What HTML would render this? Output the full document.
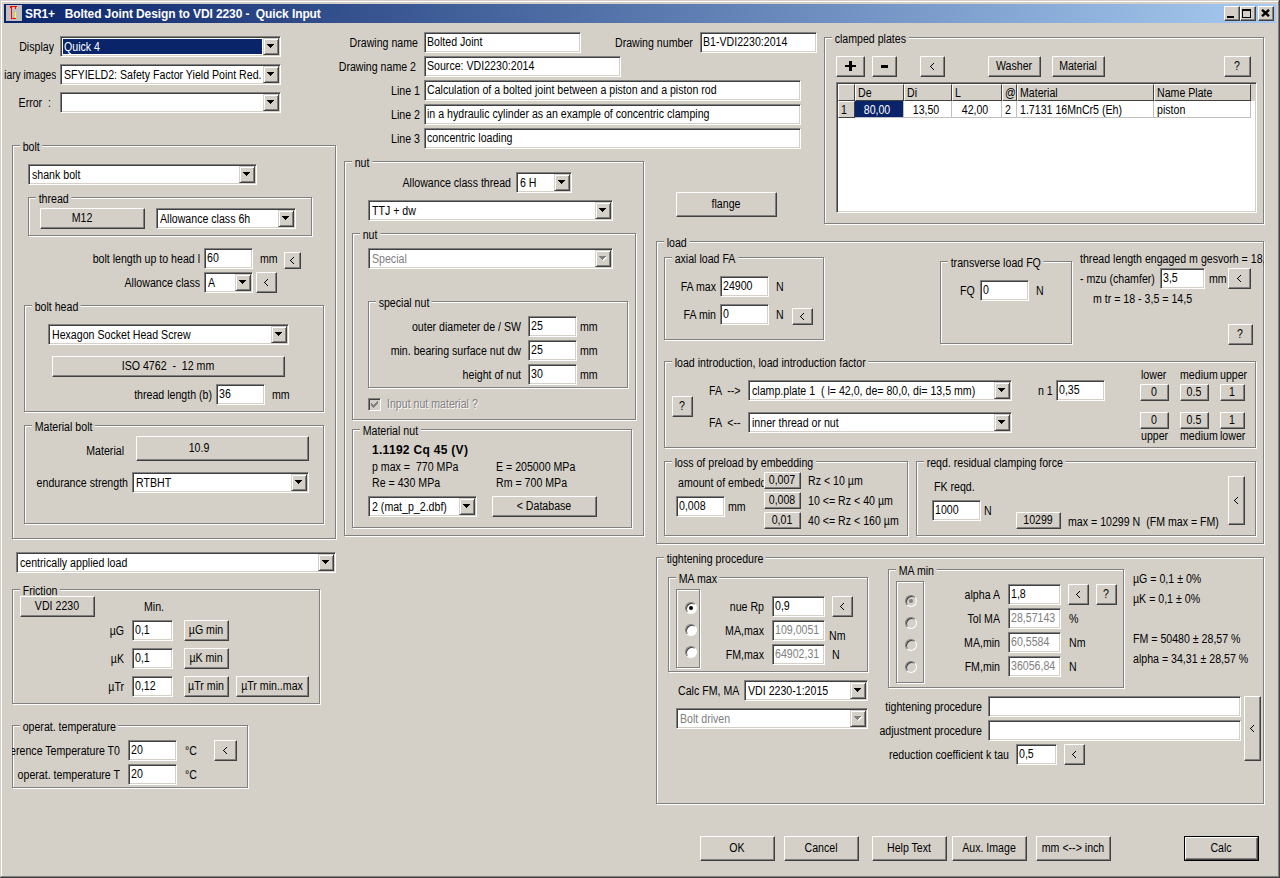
<!DOCTYPE html>
<html><head><meta charset="utf-8"><style>
*{margin:0;padding:0}
html,body{width:1280px;height:878px;overflow:hidden;background:#D4D0C8}
body{position:relative;font-family:"Liberation Sans",sans-serif;font-size:11px;color:#000}
body>div,body>svg{position:absolute}
.t{position:absolute;white-space:pre;line-height:14px;font-size:12px}
.pre{white-space:pre}
.e{box-sizing:border-box;background:#fff;border:1px solid;border-color:#808080 #fff #fff #808080;box-shadow:inset 1px 1px #404040, inset -1px -1px #D4D0C8}
.cb{box-sizing:border-box;background:#D4D0C8;border:1px solid;border-color:#D4D0C8 #404040 #404040 #D4D0C8;box-shadow:inset 1px 1px #fff, inset -1px -1px #808080}
.arr{width:0;height:0;border-left:4px solid transparent;border-right:4px solid transparent;border-top:4px solid #000;box-sizing:content-box;margin-left:0}
.b{box-sizing:border-box;background:#D4D0C8;border:1px solid;border-color:#fff #404040 #404040 #fff;box-shadow:inset -1px -1px #808080}
.bd{box-sizing:border-box;border:1px solid #000}
.hc{box-sizing:border-box;background:#D4D0C8;border:1px solid;border-color:#fff #404040 #404040 #fff}
.gg{box-sizing:border-box;border:1px solid #808080}
.gw{box-sizing:border-box;border:1px solid #fff}
.gl{background:#D4D0C8;padding:0 3px 0 3px}
.emb{text-shadow:1px 1px #fff}
.rad{width:12px;height:12px;box-sizing:border-box;border-radius:6px;background:#fff;border:1px solid;border-color:#808080 #fff #fff #808080;box-shadow:inset 1px 1px #404040}
</style></head><body>
<div style="left:0px;top:0px;width:1280px;height:878px;background:#D4D0C8"></div>
<div style="left:1px;top:1px;width:1278px;height:876px;border-top:1px solid #fff;border-left:1px solid #fff;box-sizing:border-box"></div>
<div style="left:0px;top:0px;width:1280px;height:878px;border-right:1px solid #404040;border-bottom:1px solid #404040;box-sizing:border-box"></div>
<div style="left:1px;top:1px;width:1278px;height:876px;border-right:1px solid #808080;border-bottom:1px solid #808080;box-sizing:border-box"></div>
<div style="left:4px;top:4px;width:1272px;height:19px;background:linear-gradient(to right,#0A246A,#A6CAF0)"></div>
<div style="left:6px;top:5px;width:16px;height:16px;background:#C0C0C0"></div>
<div style="left:10px;top:6px;width:7px;height:1px;background:#f00"></div>
<div style="left:10px;top:7px;width:1px;height:1px;background:#f00"></div>
<div style="left:11px;top:7px;width:1px;height:12px;background:#f00"></div>
<div style="left:11px;top:18px;width:5px;height:1px;background:#f00"></div>
<div style="left:15px;top:7px;width:1px;height:2px;background:#f00"></div>
<div style="left:15px;top:12px;width:1px;height:6px;background:#ff0"></div>
<div class="t" style="left:25px;top:7px;color:#fff;font-weight:bold;font-size:12px;letter-spacing:-0.1px;white-space:pre">SR1+   Bolted Joint Design to VDI 2230 -  Quick Input</div>
<div class="b" style="left:1224px;top:6px;width:16px;height:15px"></div>
<div class="b" style="left:1240px;top:6px;width:16px;height:15px"></div>
<div class="b" style="left:1258px;top:6px;width:16px;height:15px"></div>
<div style="left:1227px;top:16px;width:7px;height:2px;background:#000"></div>
<div style="left:1242px;top:9px;width:9px;height:9px;border:1px solid #000;border-top-width:2px;box-sizing:border-box"></div>
<svg style="position:absolute;left:1261px;top:9px" width="9" height="8" viewBox="0 0 9 8"><path d="M1 0.8 L8 7.2 M8 0.8 L1 7.2" stroke="#000" stroke-width="2.4"/></svg>
<div class="t" style="left:-446px;top:40px;width:500px;text-align:right;transform:scaleX(0.884);transform-origin:right top;">Display</div>
<div class="e" style="left:60px;top:36px;width:221px;height:21px"></div>
<div class="cb" style="left:263px;top:38px;width:16px;height:17px"></div>
<div style="left:267px;top:44px;width:7px;height:1px;background:#000"></div>
<div style="left:268px;top:45px;width:5px;height:1px;background:#000"></div>
<div style="left:269px;top:46px;width:3px;height:1px;background:#000"></div>
<div style="left:270px;top:47px;width:1px;height:1px;background:#000"></div>
<div style="left:63px;top:39px;width:199px;height:15px;background:#0A246A"></div>
<div class="t " style="left:64px;top:40px;transform:scaleX(0.884);transform-origin:left top;color:#fff;width:225.11px;height:14px;overflow:hidden;">Quick 4</div>
<div class="t" style="left:4px;top:68px;width:52px;height:14px;overflow:hidden;"><div style="position:absolute;right:0;top:0;transform:scaleX(0.85);transform-origin:right top;">Auxiliary images</div></div>
<div class="e" style="left:60px;top:64px;width:221px;height:21px"></div>
<div class="cb" style="left:263px;top:66px;width:16px;height:17px"></div>
<div style="left:267px;top:72px;width:7px;height:1px;background:#000"></div>
<div style="left:268px;top:73px;width:5px;height:1px;background:#000"></div>
<div style="left:269px;top:74px;width:3px;height:1px;background:#000"></div>
<div style="left:270px;top:75px;width:1px;height:1px;background:#000"></div>
<div class="t " style="left:64px;top:68px;transform:scaleX(0.884);transform-origin:left top;width:225.11px;height:14px;overflow:hidden;">SFYIELD2: Safety Factor Yield Point Red.</div>
<div class="t" style="left:-449px;top:96px;width:500px;text-align:right;transform:scaleX(0.884);transform-origin:right top;">Error  :</div>
<div class="e" style="left:60px;top:92px;width:221px;height:21px"></div>
<div class="cb" style="left:263px;top:94px;width:16px;height:17px"></div>
<div style="left:267px;top:100px;width:7px;height:1px;background:#000"></div>
<div style="left:268px;top:101px;width:5px;height:1px;background:#000"></div>
<div style="left:269px;top:102px;width:3px;height:1px;background:#000"></div>
<div style="left:270px;top:103px;width:1px;height:1px;background:#000"></div>
<div class="gw" style="left:13px;top:146px;width:324px;height:394px"></div>
<div class="gg" style="left:12px;top:145px;width:324px;height:394px"></div>
<div class="t gl" style="left:20px;top:140px;transform:scaleX(0.884);transform-origin:left top;">bolt</div>
<div class="e" style="left:28px;top:164px;width:229px;height:21px"></div>
<div class="cb" style="left:239px;top:166px;width:16px;height:17px"></div>
<div style="left:243px;top:172px;width:7px;height:1px;background:#000"></div>
<div style="left:244px;top:173px;width:5px;height:1px;background:#000"></div>
<div style="left:245px;top:174px;width:3px;height:1px;background:#000"></div>
<div style="left:246px;top:175px;width:1px;height:1px;background:#000"></div>
<div class="t " style="left:32px;top:168px;transform:scaleX(0.884);transform-origin:left top;width:234.16px;height:14px;overflow:hidden;">shank bolt</div>
<div class="gw" style="left:29px;top:198px;width:284px;height:39px"></div>
<div class="gg" style="left:28px;top:197px;width:284px;height:39px"></div>
<div class="t gl" style="left:36px;top:192px;transform:scaleX(0.884);transform-origin:left top;">thread</div>
<div class="b" style="left:40px;top:208px;width:105px;height:21px"></div>
<div class="t" style="left:30px;top:211px;width:104px;text-align:center;transform:scaleX(0.884);transform-origin:center top;">M12</div>
<div class="e" style="left:156px;top:208px;width:140px;height:21px"></div>
<div class="cb" style="left:278px;top:210px;width:16px;height:17px"></div>
<div style="left:282px;top:216px;width:7px;height:1px;background:#000"></div>
<div style="left:283px;top:217px;width:5px;height:1px;background:#000"></div>
<div style="left:284px;top:218px;width:3px;height:1px;background:#000"></div>
<div style="left:285px;top:219px;width:1px;height:1px;background:#000"></div>
<div class="t " style="left:160px;top:212px;transform:scaleX(0.884);transform-origin:left top;width:133.48px;height:14px;overflow:hidden;">Allowance class 6h</div>
<div class="t" style="left:-300px;top:252px;width:500px;text-align:right;transform:scaleX(0.884);transform-origin:right top;">bolt length up to head l</div>
<div class="e" style="left:204px;top:248px;width:49px;height:21px"></div>
<div class="t " style="left:207px;top:251px;transform:scaleX(0.884);transform-origin:left top;width:49.77px;height:14px;overflow:hidden;">60</div>
<div class="t " style="left:260px;top:252px;transform:scaleX(0.884);transform-origin:left top;">mm</div>
<div class="b" style="left:284px;top:252px;width:17px;height:17px"></div>
<div style="left:293px;top:257px;width:1px;height:1px;background:#000"></div>
<div style="left:292px;top:258px;width:1px;height:1px;background:#000"></div>
<div style="left:291px;top:259px;width:1px;height:1px;background:#000"></div>
<div style="left:290px;top:260px;width:1px;height:1px;background:#000"></div>
<div style="left:291px;top:261px;width:1px;height:1px;background:#000"></div>
<div style="left:292px;top:262px;width:1px;height:1px;background:#000"></div>
<div style="left:293px;top:263px;width:1px;height:1px;background:#000"></div>
<div class="t" style="left:-300px;top:276px;width:500px;text-align:right;transform:scaleX(0.884);transform-origin:right top;">Allowance class</div>
<div class="e" style="left:204px;top:272px;width:49px;height:21px"></div>
<div class="cb" style="left:235px;top:274px;width:16px;height:17px"></div>
<div style="left:239px;top:280px;width:7px;height:1px;background:#000"></div>
<div style="left:240px;top:281px;width:5px;height:1px;background:#000"></div>
<div style="left:241px;top:282px;width:3px;height:1px;background:#000"></div>
<div style="left:242px;top:283px;width:1px;height:1px;background:#000"></div>
<div class="t " style="left:208px;top:276px;transform:scaleX(0.884);transform-origin:left top;width:30.54px;height:14px;overflow:hidden;">A</div>
<div class="b" style="left:256px;top:272px;width:21px;height:21px"></div>
<div style="left:267px;top:279px;width:1px;height:1px;background:#000"></div>
<div style="left:266px;top:280px;width:1px;height:1px;background:#000"></div>
<div style="left:265px;top:281px;width:1px;height:1px;background:#000"></div>
<div style="left:264px;top:282px;width:1px;height:1px;background:#000"></div>
<div style="left:265px;top:283px;width:1px;height:1px;background:#000"></div>
<div style="left:266px;top:284px;width:1px;height:1px;background:#000"></div>
<div style="left:267px;top:285px;width:1px;height:1px;background:#000"></div>
<div class="gw" style="left:25px;top:306px;width:300px;height:107px"></div>
<div class="gg" style="left:24px;top:305px;width:300px;height:107px"></div>
<div class="t gl" style="left:32px;top:300px;transform:scaleX(0.884);transform-origin:left top;">bolt head</div>
<div class="e" style="left:48px;top:324px;width:241px;height:21px"></div>
<div class="cb" style="left:271px;top:326px;width:16px;height:17px"></div>
<div style="left:275px;top:332px;width:7px;height:1px;background:#000"></div>
<div style="left:276px;top:333px;width:5px;height:1px;background:#000"></div>
<div style="left:277px;top:334px;width:3px;height:1px;background:#000"></div>
<div style="left:278px;top:335px;width:1px;height:1px;background:#000"></div>
<div class="t " style="left:52px;top:328px;transform:scaleX(0.884);transform-origin:left top;width:247.74px;height:14px;overflow:hidden;">Hexagon Socket Head Screw</div>
<div class="b" style="left:52px;top:356px;width:233px;height:21px"></div>
<div class="t" style="left:52px;top:359px;width:232px;text-align:center;transform:scaleX(0.884);transform-origin:center top;">ISO 4762  -  12 mm</div>
<div class="t" style="left:-288px;top:388px;width:500px;text-align:right;transform:scaleX(0.884);transform-origin:right top;">thread length (b)</div>
<div class="e" style="left:216px;top:384px;width:49px;height:21px"></div>
<div class="t " style="left:219px;top:387px;transform:scaleX(0.884);transform-origin:left top;width:49.77px;height:14px;overflow:hidden;">36</div>
<div class="t " style="left:272px;top:388px;transform:scaleX(0.884);transform-origin:left top;">mm</div>
<div class="gw" style="left:25px;top:426px;width:300px;height:99px"></div>
<div class="gg" style="left:24px;top:425px;width:300px;height:99px"></div>
<div class="t gl" style="left:32px;top:420px;transform:scaleX(0.884);transform-origin:left top;">Material bolt</div>
<div class="t" style="left:-376px;top:444px;width:500px;text-align:right;transform:scaleX(0.884);transform-origin:right top;">Material</div>
<div class="b" style="left:136px;top:436px;width:173px;height:25px"></div>
<div class="t" style="left:113px;top:441px;width:172px;text-align:center;transform:scaleX(0.884);transform-origin:center top;">10.9</div>
<div class="t" style="left:-372px;top:476px;width:500px;text-align:right;transform:scaleX(0.884);transform-origin:right top;">endurance strength</div>
<div class="e" style="left:132px;top:472px;width:177px;height:21px"></div>
<div class="cb" style="left:291px;top:474px;width:16px;height:17px"></div>
<div style="left:295px;top:480px;width:7px;height:1px;background:#000"></div>
<div style="left:296px;top:481px;width:5px;height:1px;background:#000"></div>
<div style="left:297px;top:482px;width:3px;height:1px;background:#000"></div>
<div style="left:298px;top:483px;width:1px;height:1px;background:#000"></div>
<div class="t " style="left:136px;top:476px;transform:scaleX(0.884);transform-origin:left top;width:175.34px;height:14px;overflow:hidden;">RTBHT</div>
<div class="e" style="left:16px;top:552px;width:320px;height:21px"></div>
<div class="cb" style="left:318px;top:554px;width:16px;height:17px"></div>
<div style="left:322px;top:560px;width:7px;height:1px;background:#000"></div>
<div style="left:323px;top:561px;width:5px;height:1px;background:#000"></div>
<div style="left:324px;top:562px;width:3px;height:1px;background:#000"></div>
<div style="left:325px;top:563px;width:1px;height:1px;background:#000"></div>
<div class="t " style="left:20px;top:556px;transform:scaleX(0.884);transform-origin:left top;width:337.10px;height:14px;overflow:hidden;">centrically applied load</div>
<div class="gw" style="left:13px;top:590px;width:308px;height:115px"></div>
<div class="gg" style="left:12px;top:589px;width:308px;height:115px"></div>
<div class="t gl" style="left:20px;top:584px;transform:scaleX(0.884);transform-origin:left top;">Friction</div>
<div class="b" style="left:20px;top:596px;width:75px;height:21px"></div>
<div class="t" style="left:20px;top:599px;width:74px;text-align:center;transform:scaleX(0.884);transform-origin:center top;">VDI 2230</div>
<div class="t " style="left:144px;top:600px;transform:scaleX(0.884);transform-origin:left top;">Min.</div>
<div class="t" style="left:-376px;top:624px;width:500px;text-align:right;transform:scaleX(0.884);transform-origin:right top;">µG</div>
<div class="e" style="left:132px;top:620px;width:41px;height:21px"></div>
<div class="t " style="left:135px;top:623px;transform:scaleX(0.884);transform-origin:left top;width:40.72px;height:14px;overflow:hidden;">0,1</div>
<div class="b" style="left:184px;top:620px;width:45px;height:21px"></div>
<div class="t" style="left:184px;top:623px;width:44px;text-align:center;transform:scaleX(0.884);transform-origin:center top;">µG min</div>
<div class="t" style="left:-376px;top:652px;width:500px;text-align:right;transform:scaleX(0.884);transform-origin:right top;">µK</div>
<div class="e" style="left:132px;top:648px;width:41px;height:21px"></div>
<div class="t " style="left:135px;top:651px;transform:scaleX(0.884);transform-origin:left top;width:40.72px;height:14px;overflow:hidden;">0,1</div>
<div class="b" style="left:184px;top:648px;width:45px;height:21px"></div>
<div class="t" style="left:184px;top:651px;width:44px;text-align:center;transform:scaleX(0.884);transform-origin:center top;">µK min</div>
<div class="t" style="left:-376px;top:680px;width:500px;text-align:right;transform:scaleX(0.884);transform-origin:right top;">µTr</div>
<div class="e" style="left:132px;top:676px;width:41px;height:21px"></div>
<div class="t " style="left:135px;top:679px;transform:scaleX(0.884);transform-origin:left top;width:40.72px;height:14px;overflow:hidden;">0,12</div>
<div class="b" style="left:184px;top:676px;width:45px;height:21px"></div>
<div class="t" style="left:184px;top:679px;width:44px;text-align:center;transform:scaleX(0.884);transform-origin:center top;">µTr min</div>
<div class="b" style="left:236px;top:676px;width:73px;height:21px"></div>
<div class="t" style="left:236px;top:679px;width:72px;text-align:center;transform:scaleX(0.884);transform-origin:center top;">µTr min..max</div>
<div class="gw" style="left:13px;top:726px;width:236px;height:63px"></div>
<div class="gg" style="left:12px;top:725px;width:236px;height:63px"></div>
<div class="t gl" style="left:20px;top:720px;transform:scaleX(0.884);transform-origin:left top;">operat. temperature</div>
<div class="t" style="left:12px;top:744px;width:108px;height:14px;overflow:hidden;"><div style="position:absolute;right:0;top:0;transform:scaleX(0.884);transform-origin:right top;">Reference Temperature T0</div></div>
<div class="e" style="left:128px;top:740px;width:49px;height:21px"></div>
<div class="t " style="left:131px;top:743px;transform:scaleX(0.884);transform-origin:left top;width:49.77px;height:14px;overflow:hidden;">20</div>
<div class="t " style="left:185px;top:744px;transform:scaleX(0.884);transform-origin:left top;">°C</div>
<div class="b" style="left:214px;top:740px;width:23px;height:21px"></div>
<div style="left:226px;top:747px;width:1px;height:1px;background:#000"></div>
<div style="left:225px;top:748px;width:1px;height:1px;background:#000"></div>
<div style="left:224px;top:749px;width:1px;height:1px;background:#000"></div>
<div style="left:223px;top:750px;width:1px;height:1px;background:#000"></div>
<div style="left:224px;top:751px;width:1px;height:1px;background:#000"></div>
<div style="left:225px;top:752px;width:1px;height:1px;background:#000"></div>
<div style="left:226px;top:753px;width:1px;height:1px;background:#000"></div>
<div class="t" style="left:-380px;top:768px;width:500px;text-align:right;transform:scaleX(0.884);transform-origin:right top;">operat. temperature T</div>
<div class="e" style="left:128px;top:764px;width:49px;height:21px"></div>
<div class="t " style="left:131px;top:767px;transform:scaleX(0.884);transform-origin:left top;width:49.77px;height:14px;overflow:hidden;">20</div>
<div class="t " style="left:185px;top:768px;transform:scaleX(0.884);transform-origin:left top;">°C</div>
<div class="t" style="left:-82px;top:36px;width:500px;text-align:right;transform:scaleX(0.884);transform-origin:right top;">Drawing name</div>
<div class="e" style="left:424px;top:32px;width:157px;height:21px"></div>
<div class="t " style="left:427px;top:35px;transform:scaleX(0.884);transform-origin:left top;width:171.95px;height:14px;overflow:hidden;">Bolted Joint</div>
<div class="t" style="left:-84px;top:60px;width:500px;text-align:right;transform:scaleX(0.884);transform-origin:right top;">Drawing name 2</div>
<div class="e" style="left:424px;top:56px;width:197px;height:21px"></div>
<div class="t " style="left:427px;top:59px;transform:scaleX(0.884);transform-origin:left top;width:217.19px;height:14px;overflow:hidden;">Source: VDI2230:2014</div>
<div class="t" style="left:-80px;top:84px;width:500px;text-align:right;transform:scaleX(0.884);transform-origin:right top;">Line 1</div>
<div class="e" style="left:424px;top:80px;width:377px;height:21px"></div>
<div class="t " style="left:427px;top:83px;transform:scaleX(0.884);transform-origin:left top;width:420.81px;height:14px;overflow:hidden;">Calculation of a bolted joint between a piston and a piston rod</div>
<div class="t" style="left:-80px;top:108px;width:500px;text-align:right;transform:scaleX(0.884);transform-origin:right top;">Line 2</div>
<div class="e" style="left:424px;top:104px;width:377px;height:21px"></div>
<div class="t " style="left:427px;top:107px;transform:scaleX(0.884);transform-origin:left top;width:420.81px;height:14px;overflow:hidden;">in a hydraulic cylinder as an example of concentric clamping</div>
<div class="t" style="left:-80px;top:132px;width:500px;text-align:right;transform:scaleX(0.884);transform-origin:right top;">Line 3</div>
<div class="e" style="left:424px;top:128px;width:377px;height:21px"></div>
<div class="t " style="left:427px;top:131px;transform:scaleX(0.884);transform-origin:left top;width:420.81px;height:14px;overflow:hidden;">concentric loading</div>
<div class="t " style="left:615px;top:36px;transform:scaleX(0.884);transform-origin:left top;">Drawing number</div>
<div class="e" style="left:700px;top:32px;width:117px;height:21px"></div>
<div class="t " style="left:703px;top:35px;transform:scaleX(0.884);transform-origin:left top;width:126.70px;height:14px;overflow:hidden;">B1-VDI2230:2014</div>
<div class="gw" style="left:345px;top:162px;width:300px;height:375px"></div>
<div class="gg" style="left:344px;top:161px;width:300px;height:375px"></div>
<div class="t gl" style="left:352px;top:156px;transform:scaleX(0.884);transform-origin:left top;">nut</div>
<div class="t" style="left:11px;top:176px;width:500px;text-align:right;transform:scaleX(0.884);transform-origin:right top;">Allowance class thread</div>
<div class="e" style="left:516px;top:172px;width:56px;height:21px"></div>
<div class="cb" style="left:554px;top:174px;width:16px;height:17px"></div>
<div style="left:558px;top:180px;width:7px;height:1px;background:#000"></div>
<div style="left:559px;top:181px;width:5px;height:1px;background:#000"></div>
<div style="left:560px;top:182px;width:3px;height:1px;background:#000"></div>
<div style="left:561px;top:183px;width:1px;height:1px;background:#000"></div>
<div class="t " style="left:520px;top:176px;transform:scaleX(0.884);transform-origin:left top;width:38.46px;height:14px;overflow:hidden;">6 H</div>
<div class="e" style="left:368px;top:200px;width:245px;height:21px"></div>
<div class="cb" style="left:595px;top:202px;width:16px;height:17px"></div>
<div style="left:599px;top:208px;width:7px;height:1px;background:#000"></div>
<div style="left:600px;top:209px;width:5px;height:1px;background:#000"></div>
<div style="left:601px;top:210px;width:3px;height:1px;background:#000"></div>
<div style="left:602px;top:211px;width:1px;height:1px;background:#000"></div>
<div class="t " style="left:372px;top:204px;transform:scaleX(0.884);transform-origin:left top;width:252.26px;height:14px;overflow:hidden;">TTJ + dw</div>
<div class="gw" style="left:353px;top:234px;width:284px;height:187px"></div>
<div class="gg" style="left:352px;top:233px;width:284px;height:187px"></div>
<div class="t gl" style="left:360px;top:228px;transform:scaleX(0.884);transform-origin:left top;">nut</div>
<div class="e" style="left:368px;top:248px;width:245px;height:21px"></div>
<div class="cb" style="left:595px;top:250px;width:16px;height:17px"></div>
<div style="left:600px;top:257px;width:7px;height:1px;background:#fff"></div>
<div style="left:601px;top:258px;width:5px;height:1px;background:#fff"></div>
<div style="left:602px;top:259px;width:3px;height:1px;background:#fff"></div>
<div style="left:603px;top:260px;width:1px;height:1px;background:#fff"></div>
<div style="left:599px;top:256px;width:7px;height:1px;background:#808080"></div>
<div style="left:600px;top:257px;width:5px;height:1px;background:#808080"></div>
<div style="left:601px;top:258px;width:3px;height:1px;background:#808080"></div>
<div style="left:602px;top:259px;width:1px;height:1px;background:#808080"></div>
<div class="t " style="left:372px;top:252px;transform:scaleX(0.884);transform-origin:left top;color:#808080;width:252.26px;height:14px;overflow:hidden;">Special</div>
<div class="gw" style="left:369px;top:302px;width:260px;height:87px"></div>
<div class="gg" style="left:368px;top:301px;width:260px;height:87px"></div>
<div class="t gl" style="left:376px;top:296px;transform:scaleX(0.884);transform-origin:left top;">special nut</div>
<div class="t" style="left:21px;top:320px;width:500px;text-align:right;transform:scaleX(0.884);transform-origin:right top;">outer diameter de / SW</div>
<div class="e" style="left:528px;top:316px;width:49px;height:21px"></div>
<div class="t " style="left:531px;top:319px;transform:scaleX(0.884);transform-origin:left top;width:49.77px;height:14px;overflow:hidden;">25</div>
<div class="t " style="left:580px;top:320px;transform:scaleX(0.884);transform-origin:left top;">mm</div>
<div class="t" style="left:21px;top:344px;width:500px;text-align:right;transform:scaleX(0.884);transform-origin:right top;">min. bearing surface nut dw</div>
<div class="e" style="left:528px;top:340px;width:49px;height:21px"></div>
<div class="t " style="left:531px;top:343px;transform:scaleX(0.884);transform-origin:left top;width:49.77px;height:14px;overflow:hidden;">25</div>
<div class="t " style="left:580px;top:344px;transform:scaleX(0.884);transform-origin:left top;">mm</div>
<div class="t" style="left:21px;top:368px;width:500px;text-align:right;transform:scaleX(0.884);transform-origin:right top;">height of nut</div>
<div class="e" style="left:528px;top:364px;width:49px;height:21px"></div>
<div class="t " style="left:531px;top:367px;transform:scaleX(0.884);transform-origin:left top;width:49.77px;height:14px;overflow:hidden;">30</div>
<div class="t " style="left:580px;top:368px;transform:scaleX(0.884);transform-origin:left top;">mm</div>
<div style="left:368px;top:398px;width:13px;height:13px;box-sizing:border-box;border:1px solid;border-color:#808080 #fff #fff #808080;box-shadow:inset 1px 1px #404040, inset -1px -1px #D4D0C8;background:#D4D0C8"></div>
<div style="left:377px;top:401px;width:1px;height:1px;background:#808080"></div>
<div style="left:376px;top:402px;width:1px;height:1px;background:#808080"></div>
<div style="left:377px;top:402px;width:1px;height:1px;background:#808080"></div>
<div style="left:371px;top:403px;width:1px;height:1px;background:#808080"></div>
<div style="left:375px;top:403px;width:1px;height:1px;background:#808080"></div>
<div style="left:376px;top:403px;width:1px;height:1px;background:#808080"></div>
<div style="left:377px;top:403px;width:1px;height:1px;background:#808080"></div>
<div style="left:371px;top:404px;width:1px;height:1px;background:#808080"></div>
<div style="left:372px;top:404px;width:1px;height:1px;background:#808080"></div>
<div style="left:374px;top:404px;width:1px;height:1px;background:#808080"></div>
<div style="left:375px;top:404px;width:1px;height:1px;background:#808080"></div>
<div style="left:376px;top:404px;width:1px;height:1px;background:#808080"></div>
<div style="left:371px;top:405px;width:1px;height:1px;background:#808080"></div>
<div style="left:372px;top:405px;width:1px;height:1px;background:#808080"></div>
<div style="left:373px;top:405px;width:1px;height:1px;background:#808080"></div>
<div style="left:374px;top:405px;width:1px;height:1px;background:#808080"></div>
<div style="left:375px;top:405px;width:1px;height:1px;background:#808080"></div>
<div style="left:372px;top:406px;width:1px;height:1px;background:#808080"></div>
<div style="left:373px;top:406px;width:1px;height:1px;background:#808080"></div>
<div style="left:374px;top:406px;width:1px;height:1px;background:#808080"></div>
<div style="left:373px;top:407px;width:1px;height:1px;background:#808080"></div>
<div class="t emb" style="left:387px;top:397px;transform:scaleX(0.884);transform-origin:left top;color:#808080;">Input nut material ?</div>
<div class="gw" style="left:353px;top:430px;width:280px;height:99px"></div>
<div class="gg" style="left:352px;top:429px;width:280px;height:99px"></div>
<div class="t gl" style="left:360px;top:424px;transform:scaleX(0.884);transform-origin:left top;">Material nut</div>
<div class="t" style="left:372px;top:443px;font-weight:bold;font-size:12px;letter-spacing:0.3px">1.1192 Cq 45 (V)</div>
<div class="t pre" style="left:372px;top:460px;transform:scaleX(0.884);transform-origin:left top;">p max =  770 MPa</div>
<div class="t " style="left:372px;top:476px;transform:scaleX(0.884);transform-origin:left top;">Re = 430 MPa</div>
<div class="t " style="left:496px;top:460px;transform:scaleX(0.884);transform-origin:left top;">E = 205000 MPa</div>
<div class="t " style="left:496px;top:476px;transform:scaleX(0.884);transform-origin:left top;">Rm = 700 MPa</div>
<div class="e" style="left:368px;top:496px;width:109px;height:21px"></div>
<div class="cb" style="left:459px;top:498px;width:16px;height:17px"></div>
<div style="left:463px;top:504px;width:7px;height:1px;background:#000"></div>
<div style="left:464px;top:505px;width:5px;height:1px;background:#000"></div>
<div style="left:465px;top:506px;width:3px;height:1px;background:#000"></div>
<div style="left:466px;top:507px;width:1px;height:1px;background:#000"></div>
<div class="t " style="left:372px;top:500px;transform:scaleX(0.884);transform-origin:left top;width:98.42px;height:14px;overflow:hidden;">2 (mat_p_2.dbf)</div>
<div class="b" style="left:492px;top:496px;width:105px;height:21px"></div>
<div class="t" style="left:492px;top:499px;width:104px;text-align:center;transform:scaleX(0.884);transform-origin:center top;">&lt; Database</div>
<div class="b" style="left:676px;top:192px;width:101px;height:25px"></div>
<div class="t" style="left:676px;top:197px;width:100px;text-align:center;transform:scaleX(0.884);transform-origin:center top;">flange</div>
<div class="gw" style="left:825px;top:38px;width:440px;height:187px"></div>
<div class="gg" style="left:824px;top:37px;width:440px;height:187px"></div>
<div class="t gl" style="left:832px;top:32px;transform:scaleX(0.884);transform-origin:left top;">clamped plates</div>
<div class="b" style="left:836px;top:56px;width:29px;height:21px"></div>
<div class="b" style="left:872px;top:56px;width:25px;height:21px"></div>
<div style="left:845px;top:65px;width:11px;height:2px;background:#000"></div>
<div style="left:849px;top:61px;width:3px;height:10px;background:#000"></div>
<div style="left:881px;top:65px;width:7px;height:3px;background:#000"></div>
<div class="b" style="left:920px;top:56px;width:25px;height:21px"></div>
<div style="left:933px;top:63px;width:1px;height:1px;background:#000"></div>
<div style="left:932px;top:64px;width:1px;height:1px;background:#000"></div>
<div style="left:931px;top:65px;width:1px;height:1px;background:#000"></div>
<div style="left:930px;top:66px;width:1px;height:1px;background:#000"></div>
<div style="left:931px;top:67px;width:1px;height:1px;background:#000"></div>
<div style="left:932px;top:68px;width:1px;height:1px;background:#000"></div>
<div style="left:933px;top:69px;width:1px;height:1px;background:#000"></div>
<div class="b" style="left:988px;top:56px;width:53px;height:21px"></div>
<div class="t" style="left:988px;top:59px;width:52px;text-align:center;transform:scaleX(0.884);transform-origin:center top;">Washer</div>
<div class="b" style="left:1052px;top:56px;width:53px;height:21px"></div>
<div class="t" style="left:1052px;top:59px;width:52px;text-align:center;transform:scaleX(0.884);transform-origin:center top;">Material</div>
<div class="b" style="left:1224px;top:56px;width:27px;height:21px"></div>
<div class="t" style="left:1224px;top:59px;width:26px;text-align:center;transform:scaleX(0.884);transform-origin:center top;">?</div>
<div class="e" style="left:836px;top:82px;width:421px;height:131px"></div>
<div style="left:838px;top:84px;width:417px;height:17px;background:#D4D0C8"></div>
<div class="hc" style="left:838px;top:84px;width:17px;height:17px"></div>
<div class="hc" style="left:855px;top:84px;width:49px;height:17px"></div>
<div class="t " style="left:858px;top:86px;transform:scaleX(0.884);transform-origin:left top;">De</div>
<div class="hc" style="left:904px;top:84px;width:48px;height:17px"></div>
<div class="t " style="left:907px;top:86px;transform:scaleX(0.884);transform-origin:left top;">Di</div>
<div class="hc" style="left:952px;top:84px;width:50px;height:17px"></div>
<div class="t " style="left:955px;top:86px;transform:scaleX(0.884);transform-origin:left top;">L</div>
<div class="hc" style="left:1002px;top:84px;width:15px;height:17px"></div>
<div class="t " style="left:1005px;top:86px;transform:scaleX(0.884);transform-origin:left top;">@</div>
<div class="hc" style="left:1017px;top:84px;width:137px;height:17px"></div>
<div class="t " style="left:1020px;top:86px;transform:scaleX(0.884);transform-origin:left top;">Material</div>
<div class="hc" style="left:1154px;top:84px;width:97px;height:17px"></div>
<div class="t " style="left:1157px;top:86px;transform:scaleX(0.884);transform-origin:left top;">Name Plate</div>
<div class="hc" style="left:838px;top:101px;width:17px;height:17px"></div>
<div class="t " style="left:841px;top:103px;transform:scaleX(0.884);transform-origin:left top;">1</div>
<div style="left:855px;top:101px;width:49px;height:17px;box-sizing:border-box;border-right:1px solid #C0C0C0;border-bottom:1px solid #C0C0C0"></div>
<div style="left:904px;top:101px;width:48px;height:17px;box-sizing:border-box;border-right:1px solid #C0C0C0;border-bottom:1px solid #C0C0C0"></div>
<div style="left:952px;top:101px;width:50px;height:17px;box-sizing:border-box;border-right:1px solid #C0C0C0;border-bottom:1px solid #C0C0C0"></div>
<div style="left:1002px;top:101px;width:15px;height:17px;box-sizing:border-box;border-right:1px solid #C0C0C0;border-bottom:1px solid #C0C0C0"></div>
<div style="left:1017px;top:101px;width:137px;height:17px;box-sizing:border-box;border-right:1px solid #C0C0C0;border-bottom:1px solid #C0C0C0"></div>
<div style="left:1154px;top:101px;width:97px;height:17px;box-sizing:border-box;border-right:1px solid #C0C0C0;border-bottom:1px solid #C0C0C0"></div>
<div style="left:855px;top:101px;width:48px;height:16px;background:#0A246A"></div>
<div class="t" style="left:853px;top:103px;width:48px;text-align:center;transform:scaleX(0.884);transform-origin:center top;color:#fff;">80,00</div>
<div class="t" style="left:902px;top:103px;width:48px;text-align:center;transform:scaleX(0.884);transform-origin:center top;">13,50</div>
<div class="t" style="left:950px;top:103px;width:50px;text-align:center;transform:scaleX(0.884);transform-origin:center top;">42,00</div>
<div class="t " style="left:1005px;top:103px;transform:scaleX(0.884);transform-origin:left top;">2</div>
<div class="t " style="left:1020px;top:103px;transform:scaleX(0.884);transform-origin:left top;">1.7131 16MnCr5 (Eh)</div>
<div class="t " style="left:1157px;top:103px;transform:scaleX(0.884);transform-origin:left top;">piston</div>
<div class="gw" style="left:657px;top:242px;width:608px;height:303px"></div>
<div class="gg" style="left:656px;top:241px;width:608px;height:303px"></div>
<div class="t gl" style="left:664px;top:236px;transform:scaleX(0.884);transform-origin:left top;">load</div>
<div class="gw" style="left:665px;top:258px;width:160px;height:83px"></div>
<div class="gg" style="left:664px;top:257px;width:160px;height:83px"></div>
<div class="t gl" style="left:672px;top:252px;transform:scaleX(0.884);transform-origin:left top;">axial load FA</div>
<div class="t" style="left:216px;top:280px;width:500px;text-align:right;transform:scaleX(0.884);transform-origin:right top;">FA max</div>
<div class="e" style="left:720px;top:276px;width:49px;height:21px"></div>
<div class="t " style="left:723px;top:279px;transform:scaleX(0.884);transform-origin:left top;width:49.77px;height:14px;overflow:hidden;">24900</div>
<div class="t " style="left:776px;top:280px;transform:scaleX(0.884);transform-origin:left top;">N</div>
<div class="t" style="left:216px;top:308px;width:500px;text-align:right;transform:scaleX(0.884);transform-origin:right top;">FA min</div>
<div class="e" style="left:720px;top:304px;width:49px;height:21px"></div>
<div class="t " style="left:723px;top:307px;transform:scaleX(0.884);transform-origin:left top;width:49.77px;height:14px;overflow:hidden;">0</div>
<div class="t " style="left:776px;top:308px;transform:scaleX(0.884);transform-origin:left top;">N</div>
<div class="b" style="left:792px;top:308px;width:21px;height:17px"></div>
<div style="left:803px;top:313px;width:1px;height:1px;background:#000"></div>
<div style="left:802px;top:314px;width:1px;height:1px;background:#000"></div>
<div style="left:801px;top:315px;width:1px;height:1px;background:#000"></div>
<div style="left:800px;top:316px;width:1px;height:1px;background:#000"></div>
<div style="left:801px;top:317px;width:1px;height:1px;background:#000"></div>
<div style="left:802px;top:318px;width:1px;height:1px;background:#000"></div>
<div style="left:803px;top:319px;width:1px;height:1px;background:#000"></div>
<div class="gw" style="left:941px;top:262px;width:132px;height:83px"></div>
<div class="gg" style="left:940px;top:261px;width:132px;height:83px"></div>
<div class="t gl" style="left:948px;top:256px;transform:scaleX(0.884);transform-origin:left top;">transverse load FQ</div>
<div class="t " style="left:960px;top:284px;transform:scaleX(0.884);transform-origin:left top;">FQ</div>
<div class="e" style="left:980px;top:280px;width:49px;height:21px"></div>
<div class="t " style="left:983px;top:283px;transform:scaleX(0.884);transform-origin:left top;width:49.77px;height:14px;overflow:hidden;">0</div>
<div class="t " style="left:1036px;top:284px;transform:scaleX(0.884);transform-origin:left top;">N</div>
<div class="t " style="left:1080px;top:252px;transform:scaleX(0.884);transform-origin:left top;width:208.14px;height:14px;overflow:hidden;">thread length engaged m gesvorh = 18,0</div>
<div class="t " style="left:1080px;top:272px;transform:scaleX(0.884);transform-origin:left top;">- mzu (chamfer)</div>
<div class="e" style="left:1160px;top:268px;width:45px;height:21px"></div>
<div class="t " style="left:1163px;top:271px;transform:scaleX(0.884);transform-origin:left top;width:45.25px;height:14px;overflow:hidden;">3,5</div>
<div class="t " style="left:1209px;top:272px;transform:scaleX(0.884);transform-origin:left top;">mm</div>
<div class="b" style="left:1228px;top:268px;width:23px;height:21px"></div>
<div style="left:1240px;top:275px;width:1px;height:1px;background:#000"></div>
<div style="left:1239px;top:276px;width:1px;height:1px;background:#000"></div>
<div style="left:1238px;top:277px;width:1px;height:1px;background:#000"></div>
<div style="left:1237px;top:278px;width:1px;height:1px;background:#000"></div>
<div style="left:1238px;top:279px;width:1px;height:1px;background:#000"></div>
<div style="left:1239px;top:280px;width:1px;height:1px;background:#000"></div>
<div style="left:1240px;top:281px;width:1px;height:1px;background:#000"></div>
<div class="t " style="left:1093px;top:292px;transform:scaleX(0.884);transform-origin:left top;">m tr = 18 - 3,5 = 14,5</div>
<div class="b" style="left:1228px;top:324px;width:25px;height:21px"></div>
<div class="t" style="left:1228px;top:327px;width:24px;text-align:center;transform:scaleX(0.884);transform-origin:center top;">?</div>
<div class="gw" style="left:665px;top:362px;width:592px;height:87px"></div>
<div class="gg" style="left:664px;top:361px;width:592px;height:87px"></div>
<div class="t gl" style="left:672px;top:356px;transform:scaleX(0.884);transform-origin:left top;">load introduction, load introduction factor</div>
<div class="b" style="left:672px;top:396px;width:21px;height:21px"></div>
<div class="t" style="left:672px;top:399px;width:20px;text-align:center;transform:scaleX(0.884);transform-origin:center top;">?</div>
<div class="t pre" style="left:709px;top:384px;transform:scaleX(0.884);transform-origin:left top;">FA  --&gt;</div>
<div class="e" style="left:748px;top:380px;width:264px;height:21px"></div>
<div class="cb" style="left:994px;top:382px;width:16px;height:17px"></div>
<div style="left:998px;top:388px;width:7px;height:1px;background:#000"></div>
<div style="left:999px;top:389px;width:5px;height:1px;background:#000"></div>
<div style="left:1000px;top:390px;width:3px;height:1px;background:#000"></div>
<div style="left:1001px;top:391px;width:1px;height:1px;background:#000"></div>
<div class="t " style="left:752px;top:384px;transform:scaleX(0.884);transform-origin:left top;width:273.76px;height:14px;overflow:hidden;">clamp.plate 1  ( l= 42,0, de= 80,0, di= 13,5 mm)</div>
<div class="t pre" style="left:709px;top:416px;transform:scaleX(0.884);transform-origin:left top;">FA  &lt;--</div>
<div class="e" style="left:748px;top:412px;width:264px;height:21px"></div>
<div class="cb" style="left:994px;top:414px;width:16px;height:17px"></div>
<div style="left:998px;top:420px;width:7px;height:1px;background:#000"></div>
<div style="left:999px;top:421px;width:5px;height:1px;background:#000"></div>
<div style="left:1000px;top:422px;width:3px;height:1px;background:#000"></div>
<div style="left:1001px;top:423px;width:1px;height:1px;background:#000"></div>
<div class="t " style="left:752px;top:416px;transform:scaleX(0.884);transform-origin:left top;width:273.76px;height:14px;overflow:hidden;">inner thread or nut</div>
<div class="t " style="left:1038px;top:384px;transform:scaleX(0.884);transform-origin:left top;">n 1</div>
<div class="e" style="left:1056px;top:380px;width:49px;height:21px"></div>
<div class="t " style="left:1059px;top:383px;transform:scaleX(0.884);transform-origin:left top;width:49.77px;height:14px;overflow:hidden;">0,35</div>
<div class="t " style="left:1141px;top:368px;transform:scaleX(0.884);transform-origin:left top;">lower</div>
<div class="t " style="left:1180px;top:368px;transform:scaleX(0.884);transform-origin:left top;">medium</div>
<div class="t " style="left:1220px;top:368px;transform:scaleX(0.884);transform-origin:left top;">upper</div>
<div class="b" style="left:1140px;top:384px;width:29px;height:17px"></div>
<div class="t" style="left:1140px;top:385px;width:28px;text-align:center;transform:scaleX(0.884);transform-origin:center top;">0</div>
<div class="b" style="left:1180px;top:384px;width:29px;height:17px"></div>
<div class="t" style="left:1180px;top:385px;width:28px;text-align:center;transform:scaleX(0.884);transform-origin:center top;">0.5</div>
<div class="b" style="left:1220px;top:384px;width:25px;height:17px"></div>
<div class="t" style="left:1220px;top:385px;width:24px;text-align:center;transform:scaleX(0.884);transform-origin:center top;">1</div>
<div class="b" style="left:1140px;top:412px;width:29px;height:17px"></div>
<div class="t" style="left:1140px;top:413px;width:28px;text-align:center;transform:scaleX(0.884);transform-origin:center top;">0</div>
<div class="b" style="left:1180px;top:412px;width:29px;height:17px"></div>
<div class="t" style="left:1180px;top:413px;width:28px;text-align:center;transform:scaleX(0.884);transform-origin:center top;">0.5</div>
<div class="b" style="left:1220px;top:412px;width:25px;height:17px"></div>
<div class="t" style="left:1220px;top:413px;width:24px;text-align:center;transform:scaleX(0.884);transform-origin:center top;">1</div>
<div class="t " style="left:1141px;top:429px;transform:scaleX(0.884);transform-origin:left top;">upper</div>
<div class="t " style="left:1180px;top:429px;transform:scaleX(0.884);transform-origin:left top;">medium</div>
<div class="t " style="left:1220px;top:429px;transform:scaleX(0.884);transform-origin:left top;">lower</div>
<div class="gw" style="left:665px;top:462px;width:244px;height:75px"></div>
<div class="gg" style="left:664px;top:461px;width:244px;height:75px"></div>
<div class="t gl" style="left:672px;top:456px;transform:scaleX(0.884);transform-origin:left top;">loss of preload by embedding</div>
<div class="t " style="left:678px;top:476px;transform:scaleX(0.884);transform-origin:left top;width:97.29px;height:14px;overflow:hidden;">amount of embedding</div>
<div class="e" style="left:676px;top:496px;width:49px;height:21px"></div>
<div class="t " style="left:679px;top:499px;transform:scaleX(0.884);transform-origin:left top;width:49.77px;height:14px;overflow:hidden;">0,008</div>
<div class="t " style="left:728px;top:500px;transform:scaleX(0.884);transform-origin:left top;">mm</div>
<div class="b" style="left:764px;top:472px;width:37px;height:17px"></div>
<div class="t" style="left:764px;top:473px;width:36px;text-align:center;transform:scaleX(0.884);transform-origin:center top;">0,007</div>
<div class="b" style="left:764px;top:492px;width:37px;height:17px"></div>
<div class="t" style="left:764px;top:493px;width:36px;text-align:center;transform:scaleX(0.884);transform-origin:center top;">0,008</div>
<div class="b" style="left:764px;top:512px;width:37px;height:17px"></div>
<div class="t" style="left:764px;top:513px;width:36px;text-align:center;transform:scaleX(0.884);transform-origin:center top;">0,01</div>
<div class="t " style="left:808px;top:474px;transform:scaleX(0.884);transform-origin:left top;">Rz &lt; 10 µm</div>
<div class="t " style="left:808px;top:494px;transform:scaleX(0.884);transform-origin:left top;">10 &lt;= Rz &lt; 40 µm</div>
<div class="t " style="left:808px;top:514px;transform:scaleX(0.884);transform-origin:left top;">40 &lt;= Rz &lt; 160 µm</div>
<div class="gw" style="left:917px;top:462px;width:340px;height:75px"></div>
<div class="gg" style="left:916px;top:461px;width:340px;height:75px"></div>
<div class="t gl" style="left:924px;top:456px;transform:scaleX(0.884);transform-origin:left top;">reqd. residual clamping force</div>
<div class="t " style="left:934px;top:480px;transform:scaleX(0.884);transform-origin:left top;">FK reqd.</div>
<div class="e" style="left:932px;top:500px;width:49px;height:21px"></div>
<div class="t " style="left:935px;top:503px;transform:scaleX(0.884);transform-origin:left top;width:49.77px;height:14px;overflow:hidden;">1000</div>
<div class="t " style="left:984px;top:504px;transform:scaleX(0.884);transform-origin:left top;">N</div>
<div class="b" style="left:1016px;top:512px;width:45px;height:17px"></div>
<div class="t" style="left:1016px;top:513px;width:44px;text-align:center;transform:scaleX(0.884);transform-origin:center top;">10299</div>
<div class="t pre" style="left:1068px;top:515px;transform:scaleX(0.884);transform-origin:left top;">max = 10299 N  (FM max = FM)</div>
<div class="b" style="left:1228px;top:476px;width:17px;height:49px"></div>
<div style="left:1237px;top:497px;width:1px;height:1px;background:#000"></div>
<div style="left:1236px;top:498px;width:1px;height:1px;background:#000"></div>
<div style="left:1235px;top:499px;width:1px;height:1px;background:#000"></div>
<div style="left:1234px;top:500px;width:1px;height:1px;background:#000"></div>
<div style="left:1235px;top:501px;width:1px;height:1px;background:#000"></div>
<div style="left:1236px;top:502px;width:1px;height:1px;background:#000"></div>
<div style="left:1237px;top:503px;width:1px;height:1px;background:#000"></div>
<div class="gw" style="left:657px;top:558px;width:608px;height:247px"></div>
<div class="gg" style="left:656px;top:557px;width:608px;height:247px"></div>
<div class="t gl" style="left:664px;top:552px;transform:scaleX(0.884);transform-origin:left top;">tightening procedure</div>
<div class="gw" style="left:669px;top:578px;width:200px;height:95px"></div>
<div class="gg" style="left:668px;top:577px;width:200px;height:95px"></div>
<div class="t gl" style="left:676px;top:572px;transform:scaleX(0.884);transform-origin:left top;">MA max</div>
<div class="gw" style="left:677px;top:590px;width:24px;height:79px"></div>
<div class="gg" style="left:676px;top:589px;width:24px;height:79px"></div>
<div class="rad" style="left:685px;top:602px;background:#fff"></div>
<div style="left:689px;top:606px;width:4px;height:4px;border-radius:2px;background:#000"></div>
<div class="rad" style="left:685px;top:624px;background:#fff"></div>
<div class="rad" style="left:685px;top:646px;background:#fff"></div>
<div class="t" style="left:264px;top:600px;width:500px;text-align:right;transform:scaleX(0.884);transform-origin:right top;">nue Rp</div>
<div class="e" style="left:772px;top:596px;width:53px;height:21px"></div>
<div class="t " style="left:775px;top:599px;transform:scaleX(0.884);transform-origin:left top;width:54.30px;height:14px;overflow:hidden;">0,9</div>
<div class="b" style="left:832px;top:596px;width:21px;height:21px"></div>
<div style="left:843px;top:603px;width:1px;height:1px;background:#000"></div>
<div style="left:842px;top:604px;width:1px;height:1px;background:#000"></div>
<div style="left:841px;top:605px;width:1px;height:1px;background:#000"></div>
<div style="left:840px;top:606px;width:1px;height:1px;background:#000"></div>
<div style="left:841px;top:607px;width:1px;height:1px;background:#000"></div>
<div style="left:842px;top:608px;width:1px;height:1px;background:#000"></div>
<div style="left:843px;top:609px;width:1px;height:1px;background:#000"></div>
<div class="t" style="left:264px;top:624px;width:500px;text-align:right;transform:scaleX(0.884);transform-origin:right top;">MA,max</div>
<div class="e" style="left:772px;top:620px;width:53px;height:21px"></div>
<div class="t " style="left:775px;top:623px;transform:scaleX(0.884);transform-origin:left top;color:#808080;width:54.30px;height:14px;overflow:hidden;">109,0051</div>
<div class="t " style="left:829px;top:629px;transform:scaleX(0.884);transform-origin:left top;">Nm</div>
<div class="t" style="left:264px;top:648px;width:500px;text-align:right;transform:scaleX(0.884);transform-origin:right top;">FM,max</div>
<div class="e" style="left:772px;top:644px;width:53px;height:21px"></div>
<div class="t " style="left:775px;top:647px;transform:scaleX(0.884);transform-origin:left top;color:#808080;width:54.30px;height:14px;overflow:hidden;">64902,31</div>
<div class="t " style="left:832px;top:648px;transform:scaleX(0.884);transform-origin:left top;">N</div>
<div class="t " style="left:678px;top:684px;transform:scaleX(0.884);transform-origin:left top;">Calc FM, MA</div>
<div class="e" style="left:744px;top:680px;width:124px;height:21px"></div>
<div class="cb" style="left:850px;top:682px;width:16px;height:17px"></div>
<div style="left:854px;top:688px;width:7px;height:1px;background:#000"></div>
<div style="left:855px;top:689px;width:5px;height:1px;background:#000"></div>
<div style="left:856px;top:690px;width:3px;height:1px;background:#000"></div>
<div style="left:857px;top:691px;width:1px;height:1px;background:#000"></div>
<div class="t " style="left:748px;top:684px;transform:scaleX(0.884);transform-origin:left top;width:115.38px;height:14px;overflow:hidden;">VDI 2230-1:2015</div>
<div class="e" style="left:676px;top:708px;width:192px;height:21px"></div>
<div class="cb" style="left:850px;top:710px;width:16px;height:17px"></div>
<div style="left:855px;top:717px;width:7px;height:1px;background:#fff"></div>
<div style="left:856px;top:718px;width:5px;height:1px;background:#fff"></div>
<div style="left:857px;top:719px;width:3px;height:1px;background:#fff"></div>
<div style="left:858px;top:720px;width:1px;height:1px;background:#fff"></div>
<div style="left:854px;top:716px;width:7px;height:1px;background:#808080"></div>
<div style="left:855px;top:717px;width:5px;height:1px;background:#808080"></div>
<div style="left:856px;top:718px;width:3px;height:1px;background:#808080"></div>
<div style="left:857px;top:719px;width:1px;height:1px;background:#808080"></div>
<div class="t " style="left:680px;top:712px;transform:scaleX(0.884);transform-origin:left top;color:#808080;width:192.31px;height:14px;overflow:hidden;">Bolt driven</div>
<div class="gw" style="left:889px;top:570px;width:236px;height:119px"></div>
<div class="gg" style="left:888px;top:569px;width:236px;height:119px"></div>
<div class="t gl" style="left:896px;top:564px;transform:scaleX(0.884);transform-origin:left top;">MA min</div>
<div class="gw" style="left:897px;top:582px;width:28px;height:102px"></div>
<div class="gg" style="left:896px;top:581px;width:28px;height:102px"></div>
<div class="rad" style="left:905px;top:595px;background:#D4D0C8"></div>
<div style="left:909px;top:599px;width:4px;height:4px;border-radius:2px;background:#808080"></div>
<div class="rad" style="left:905px;top:617px;background:#D4D0C8"></div>
<div class="rad" style="left:905px;top:639px;background:#D4D0C8"></div>
<div class="rad" style="left:905px;top:661px;background:#D4D0C8"></div>
<div class="t" style="left:500px;top:588px;width:500px;text-align:right;transform:scaleX(0.884);transform-origin:right top;">alpha A</div>
<div class="e" style="left:1008px;top:584px;width:53px;height:21px"></div>
<div class="t " style="left:1011px;top:587px;transform:scaleX(0.884);transform-origin:left top;width:54.30px;height:14px;overflow:hidden;">1,8</div>
<div class="b" style="left:1068px;top:584px;width:21px;height:21px"></div>
<div style="left:1079px;top:591px;width:1px;height:1px;background:#000"></div>
<div style="left:1078px;top:592px;width:1px;height:1px;background:#000"></div>
<div style="left:1077px;top:593px;width:1px;height:1px;background:#000"></div>
<div style="left:1076px;top:594px;width:1px;height:1px;background:#000"></div>
<div style="left:1077px;top:595px;width:1px;height:1px;background:#000"></div>
<div style="left:1078px;top:596px;width:1px;height:1px;background:#000"></div>
<div style="left:1079px;top:597px;width:1px;height:1px;background:#000"></div>
<div class="b" style="left:1096px;top:584px;width:21px;height:21px"></div>
<div class="t" style="left:1096px;top:587px;width:20px;text-align:center;transform:scaleX(0.884);transform-origin:center top;">?</div>
<div class="t" style="left:500px;top:612px;width:500px;text-align:right;transform:scaleX(0.884);transform-origin:right top;">Tol MA</div>
<div class="e" style="left:1008px;top:608px;width:53px;height:21px"></div>
<div class="t " style="left:1011px;top:611px;transform:scaleX(0.884);transform-origin:left top;color:#808080;width:54.30px;height:14px;overflow:hidden;">28,57143</div>
<div class="t " style="left:1069px;top:612px;transform:scaleX(0.884);transform-origin:left top;">%</div>
<div class="t" style="left:500px;top:636px;width:500px;text-align:right;transform:scaleX(0.884);transform-origin:right top;">MA,min</div>
<div class="e" style="left:1008px;top:632px;width:53px;height:21px"></div>
<div class="t " style="left:1011px;top:635px;transform:scaleX(0.884);transform-origin:left top;color:#808080;width:54.30px;height:14px;overflow:hidden;">60,5584</div>
<div class="t " style="left:1069px;top:636px;transform:scaleX(0.884);transform-origin:left top;">Nm</div>
<div class="t" style="left:500px;top:660px;width:500px;text-align:right;transform:scaleX(0.884);transform-origin:right top;">FM,min</div>
<div class="e" style="left:1008px;top:656px;width:53px;height:21px"></div>
<div class="t " style="left:1011px;top:659px;transform:scaleX(0.884);transform-origin:left top;color:#808080;width:54.30px;height:14px;overflow:hidden;">36056,84</div>
<div class="t " style="left:1069px;top:660px;transform:scaleX(0.884);transform-origin:left top;">N</div>
<div class="t " style="left:1133px;top:572px;transform:scaleX(0.884);transform-origin:left top;">µG = 0,1 ± 0%</div>
<div class="t " style="left:1133px;top:592px;transform:scaleX(0.884);transform-origin:left top;">µK = 0,1 ± 0%</div>
<div class="t " style="left:1133px;top:632px;transform:scaleX(0.884);transform-origin:left top;">FM = 50480 ± 28,57 %</div>
<div class="t " style="left:1133px;top:652px;transform:scaleX(0.884);transform-origin:left top;">alpha = 34,31 ± 28,57 %</div>
<div class="t" style="left:482px;top:700px;width:500px;text-align:right;transform:scaleX(0.884);transform-origin:right top;">tightening procedure</div>
<div class="e" style="left:988px;top:696px;width:253px;height:21px"></div>
<div class="t" style="left:482px;top:724px;width:500px;text-align:right;transform:scaleX(0.884);transform-origin:right top;">adjustment procedure</div>
<div class="e" style="left:988px;top:720px;width:253px;height:21px"></div>
<div class="t" style="left:509px;top:748px;width:500px;text-align:right;transform:scaleX(0.884);transform-origin:right top;">reduction coefficient k tau</div>
<div class="e" style="left:1016px;top:744px;width:41px;height:21px"></div>
<div class="t " style="left:1019px;top:747px;transform:scaleX(0.884);transform-origin:left top;width:40.72px;height:14px;overflow:hidden;">0,5</div>
<div class="b" style="left:1064px;top:744px;width:21px;height:21px"></div>
<div style="left:1075px;top:751px;width:1px;height:1px;background:#000"></div>
<div style="left:1074px;top:752px;width:1px;height:1px;background:#000"></div>
<div style="left:1073px;top:753px;width:1px;height:1px;background:#000"></div>
<div style="left:1072px;top:754px;width:1px;height:1px;background:#000"></div>
<div style="left:1073px;top:755px;width:1px;height:1px;background:#000"></div>
<div style="left:1074px;top:756px;width:1px;height:1px;background:#000"></div>
<div style="left:1075px;top:757px;width:1px;height:1px;background:#000"></div>
<div class="b" style="left:1244px;top:696px;width:17px;height:65px"></div>
<div style="left:1253px;top:725px;width:1px;height:1px;background:#000"></div>
<div style="left:1252px;top:726px;width:1px;height:1px;background:#000"></div>
<div style="left:1251px;top:727px;width:1px;height:1px;background:#000"></div>
<div style="left:1250px;top:728px;width:1px;height:1px;background:#000"></div>
<div style="left:1251px;top:729px;width:1px;height:1px;background:#000"></div>
<div style="left:1252px;top:730px;width:1px;height:1px;background:#000"></div>
<div style="left:1253px;top:731px;width:1px;height:1px;background:#000"></div>
<div class="b" style="left:700px;top:836px;width:75px;height:25px"></div>
<div class="t" style="left:700px;top:841px;width:74px;text-align:center;transform:scaleX(0.884);transform-origin:center top;">OK</div>
<div class="b" style="left:784px;top:836px;width:75px;height:25px"></div>
<div class="t" style="left:784px;top:841px;width:74px;text-align:center;transform:scaleX(0.884);transform-origin:center top;">Cancel</div>
<div class="b" style="left:872px;top:836px;width:75px;height:25px"></div>
<div class="t" style="left:872px;top:841px;width:74px;text-align:center;transform:scaleX(0.884);transform-origin:center top;">Help Text</div>
<div class="b" style="left:952px;top:836px;width:75px;height:25px"></div>
<div class="t" style="left:952px;top:841px;width:74px;text-align:center;transform:scaleX(0.884);transform-origin:center top;">Aux. Image</div>
<div class="b" style="left:1036px;top:836px;width:75px;height:25px"></div>
<div class="t" style="left:1036px;top:841px;width:74px;text-align:center;transform:scaleX(0.884);transform-origin:center top;">mm &lt;--&gt; inch</div>
<div class="bd" style="left:1184px;top:836px;width:75px;height:25px"></div>
<div class="b" style="left:1185px;top:837px;width:73px;height:23px"></div>
<div class="t" style="left:1184px;top:841px;width:74px;text-align:center;transform:scaleX(0.884);transform-origin:center top;">Calc</div>
</body></html>
